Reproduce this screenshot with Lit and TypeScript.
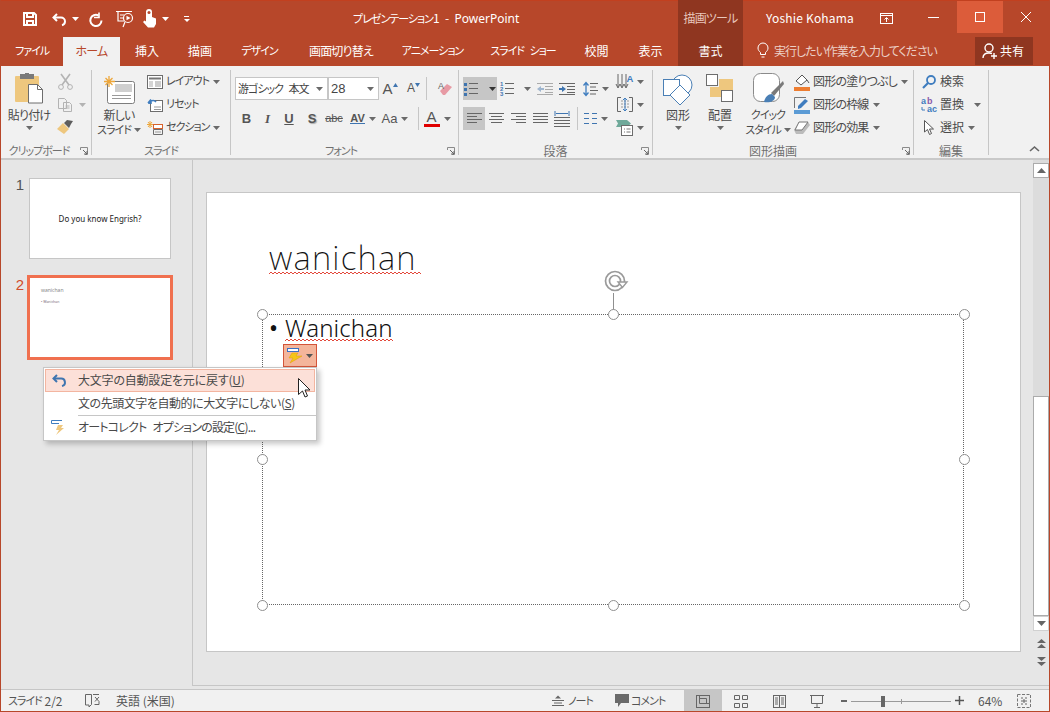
import { LitElement, html, css, svg } from "lit";
import { customElement } from "lit/decorators.js";

const ic = (w: number, h: number, body: unknown) =>
  html`<svg class="ic" width=${w} height=${h} viewBox="0 0 ${w} ${h}" fill="none">${body}</svg>`;
const caret = (c = "#6a6a6a") => ic(7, 4, svg`<path d="M0 0h7L3.5 4z" fill=${c}/>`);
const W = "#fff", G = "#6d6d6d", O = "#eec77e";

const I: Record<string, unknown> = {
  save: ic(16, 16, svg`<path d="M2 2h10l2 2v10H2z M5 2v4h6V2 M5 14v-4h6v4" stroke=${W} stroke-width="2"/>`),
  undo: ic(16, 14, svg`<path d="M5 2L1.5 5.5 5 9" stroke=${W} stroke-width="2"/><path d="M2 5.5h7a4 4 0 0 1 4 4 4 4 0 0 1-3 3.8" stroke=${W} stroke-width="2"/>`),
  redo: ic(15, 15, svg`<path d="M10.5 3.5a5.6 5.6 0 1 0 3 5" stroke=${W} stroke-width="2"/><path d="M10 0.5v5h-5" stroke=${W} stroke-width="1.6" transform="translate(1 0)"/>`),
  present: ic(18, 18, svg`<path d="M0 1.5h16M2 2v9h6M9 12l-2 5" stroke=${W} stroke-width="1.2"/><circle cx="12" cy="8" r="4.5" stroke=${W} stroke-width="1.2"/><path d="M10.5 5.8l4 2.2-4 2.2z" fill=${W}/><path d="M4 5h4M4 8h3" stroke=${W}/>`),
  touch: ic(14, 20, svg`<path d="M3 3a3 3 0 0 1 6 0v5l4 1.5V15l-2 3.5H5L0 13l1.5-1.5L3 12.500z" fill=${W}/><circle cx="6" cy="3.500" r="1.500" fill="#b7472a"/>`),
  ribbonDisp: ic(13, 11, svg`<rect x=".5" y=".5" width="12" height="10" stroke=${W}/><path d="M1 2.500h11" stroke=${W}/><path d="M6.500 9V5M4.500 6.500l2-2 2 2" stroke=${W}/>`),
  bulb: ic(12, 16, svg`<path d="M3.500 10.500C2 9 1 8 1 6a5 5 0 0 1 10 0c0 2-1 3-2.500 4.500v2h-5z M4.500 15h3" stroke=${W}/>`),
  person: ic(16, 16, svg`<circle cx="7" cy="5" r="4" stroke=${W} stroke-width="1.400"/><path d="M1 15c0-3 2-5 6-5 1 0 2 .2 3 .5" stroke=${W} stroke-width="1.400"/><path d="M12 10v6M9 13h6" stroke=${W} stroke-width="1.400"/>`),
  paste: ic(29, 31, svg`<rect x="0" y="3" width="24" height="26" rx="1" fill=${O}/><rect x="5" y="1" width="14" height="5" fill="#7a7a7a"/><rect x="10" y="0" width="4" height="3" fill="#7a7a7a"/><path d="M13.500 11.500h9l5 5v13.500h-14z" fill=${W} stroke=${G}/><path d="M22.500 11.500v5h5" stroke=${G}/>`),
  scissors: ic(15, 16, svg`<path d="M3 0l8 11M12 0L4 11" stroke="#b3b3b3" stroke-width="1.600"/><circle cx="3" cy="13" r="2.400" stroke="#b3b3b3"/><circle cx="12" cy="13" r="2.400" stroke="#b3b3b3"/>`),
  copy: ic(15, 14, svg`<path d="M.5.5h6l2 2v8h-8z M5.500 4.500h6l2 2v7h-8z" fill="#f1f1f1" stroke="#b3b3b3"/><path d="M7.500 8h4M7.500 10h4" stroke="#b3b3b3"/>`),
  brush: ic(17, 15, svg`<path d="M0 9l6-6 6 6-5 5z" fill=${O}/><path d="M7 3l3-3 6 1-2 3-2 4z" fill="#5d5d5d"/>`),
  newslide: ic(31, 28, svg`<rect x="3.500" y="5.500" width="27" height="22" rx="2" fill=${W} stroke="#7d7d7d"/><rect x="11" y="8" width="17" height="8" fill="#cfcfcf"/><path d="M8 19.500h19M8 22.500h19" stroke="#9a9a9a"/><path d="M5 0v11M0 5.500h11M1.500 2l7 7M8.500 2l-7 7" stroke="#eda73b" stroke-width="1.300"/>`),
  layout: ic(16, 14, svg`<rect x=".5" y=".5" width="15" height="13" fill=${W} stroke="#6d6d6d"/><path d="M2 3.500h12" stroke="#777" stroke-width="2"/><rect x="2" y="6" width="4" height="6" fill="#d4d4d4"/><path d="M8 7h6M8 9h6M8 11h6" stroke="#999"/>`),
  reset: ic(16, 14, svg`<rect x="3.500" y="2.500" width="12" height="11" fill=${W} stroke="#6d6d6d"/><path d="M7 9h7M7 11.500h7" stroke="#999"/><path d="M1 5l3-3.500M1 5h4 M2 6a4 4 0 0 1 7-2" stroke="#3f7dbf" stroke-width="1.600"/>`),
  section: ic(16, 14, svg`<path d="M3 0v7M0 3.500h7M1 1l4 5M5 1L1 6" stroke="#eda73b"/><rect x="6.500" y="3.500" width="9" height="4" fill=${W} stroke="#d9622b"/><path d="M6.500 8.500h9v5h-9z" stroke="#6d6d6d"/><path d="M8 11h6" stroke="#999"/>`),
  eraser: ic(15, 14, svg`<path d="M2 9l7-7 5 3-7 8H5z" fill="#e79aa4"/><text x="0" y="7" font-size="9" fill="#666" font-family="Liberation Sans">A</text>`),
  lspace: ic(15, 16, svg`<path d="M3 2v12M.5 4.500L3 1.500l2.500 3M.5 11.500l2.500 3 2.500-3" stroke="#3f7dbf" stroke-width="1.300"/><path d="M7 2.500h8M7 6h6M7 9.500h8M7 13h6" stroke="#666"/>`),
  textdir: ic(16, 16, svg`<path d="M1 0v13M5 0v13M9 0v13M-1 10l2 4 2-4M3 10l2 4 2-4M7 10l2 4 2-4" stroke="#666" stroke-width="1"/><text x="9.500" y="8" font-size="9.500" font-weight="700" fill="#3f7dbf" font-family="Liberation Sans">A</text>`),
  textalign: ic(16, 15, svg`<path d="M4 .5H.5v14H4M12 .5h3.500v14H12" stroke="#666"/><path d="M4 4h8M4 7h8M4 10h8" stroke="#999" stroke-dasharray="2 1"/><path d="M8 1v13M6 3l2-2 2 2M6 12l2 2 2-2" stroke="#3f7dbf"/>`),
  smart: ic(17, 17, svg`<path d="M0 1h11l4 3.500-4 3.500H0l2-3.500z" fill="#6fa99a"/><rect x="5.500" y="6.500" width="11" height="10" fill=${W} stroke="#6d6d6d"/><path d="M8 10h1M8 13h1M10.500 10h4M10.500 13h4" stroke="#777"/>`),
  shapes: ic(31, 31, svg`<circle cx="19" cy="11" r="10" fill=${W} stroke="#4a7fb5"/><rect x=".5" y="5.500" width="16" height="16" fill=${W} stroke="#4a7fb5"/><path d="M17 11l10 10-10 10L7 21z" fill=${W} stroke="#4a7fb5"/>`),
  arrange: ic(28, 29, svg`<rect x="13" y="5" width="14" height="12" fill=${O}/><rect x="4" y="13" width="14" height="10" fill=${O}/><rect x=".5" y=".5" width="11" height="11" fill=${W} stroke="#6d6d6d"/><rect x="15.500" y="16.500" width="11" height="11" fill=${W} stroke="#6d6d6d"/>`),
  quick: ic(31, 31, svg`<rect x=".5" y=".5" width="26" height="28" rx="7" fill=${W} stroke="#8a8a8a"/><path d="M30 8L18 20l3 3 10-12z" fill="#7a7a7a"/><path d="M11 29c1-5 4-8 8-8l3 3c0 4-5 6-11 5z" fill="#4a7fb5"/>`),
  fill: ic(16, 16, svg`<path d="M2 7l6-6 5 5-6 5z" fill=${W} stroke="#555"/><path d="M13 6l2 3" stroke="#555"/><rect x="0" y="13" width="16" height="4" fill="#ed7d31"/>`),
  stroke: ic(16, 16, svg`<path d="M.5 11V.5H12" stroke="#777"/><path d="M4 9l7-7 3 2-7 7-3 1z" fill="#3f7dbf"/><rect x="0" y="13" width="16" height="4" fill="#5b9bd5"/>`),
  effect: ic(16, 13, svg`<path d="M5 1h9l2 3-7 9H2L0 9z" fill="#bbb"/><path d="M5 1h9L8 9H1z" fill=${W} stroke="#777"/>`),
  search: ic(14, 14, svg`<circle cx="9" cy="5" r="4" stroke="#3f7dbf" stroke-width="1.800"/><path d="M6 8l-5 5" stroke="#3f7dbf" stroke-width="2.200"/>`),
  replace: ic(16, 15, svg`<text x="0" y="7" font-size="9" font-weight="700" fill="#3f7dbf" font-family="Liberation Sans">a</text><text x="6" y="7" font-size="9" font-weight="700" fill="#8a5aa8" font-family="Liberation Sans">b</text><text x="6" y="15" font-size="9" font-weight="700" fill="#3f7dbf" font-family="Liberation Sans">ac</text><path d="M1 10v3h3" stroke="#3f7dbf"/>`),
  select: ic(10, 15, svg`<path d="M.5.500v11.500l3-2.500 2 5 2-1-2-4.500h4z" fill=${W} stroke="#555"/>`),
  launcher: ic(8, 8, svg`<path d="M.5 3V.5H7.500V7.500H5" stroke="#8a8a8a"/><path d="M3 3l4 4M4 7h3V4" stroke="#666"/>`),
  up: ic(11, 6, svg`<path d="M1 5l4.500-4L10 5" stroke="#666" stroke-width="1.600"/>`),
  rotate: ic(24, 24, svg`<circle cx="11" cy="12" r="9.500" stroke="#9a9a9a" stroke-width="1.700"/><circle cx="11" cy="12" r="5.500" stroke="#9a9a9a" stroke-width="1.700"/><path d="M14 13h9l-4.500 5.500z" fill="#fff" stroke="#9a9a9a" stroke-width="1.400"/>`),
  bolt: ic(16, 15, svg`<rect x=".5" y=".5" width="11" height="3" fill=${W} stroke="#3a6fc4"/><path d="M11 5H5L2 10h4l-3 5 12-7H9z" fill="#f5c518" stroke="#e0a000" stroke-width=".5"/>`),
  boltG: ic(15, 15, svg`<path d="M.5 3.500V.5H11" stroke="#3f7dbf"/><path d="M.5 3.500H8" stroke="#3f7dbf"/><path d="M12 5H7L5 10h3l-3 5 8-7H10z" fill="#eec77e"/>`),
  menuUndo: ic(15, 13, svg`<path d="M5 1L1.500 4.500 5 8" stroke="#3f75b0" stroke-width="2"/><path d="M2 4.500h7a3.800 3.800 0 0 1 1 7.500" stroke="#3f75b0" stroke-width="2"/>`),
  cursor: ic(13, 21, svg`<path d="M.5.5v16l4-3.500 2.500 6 2.500-1-2.500-6h5z" fill=${W} stroke="#222"/>`),
  sNote: ic(12, 11, svg`<path d="M3 3.500l3-3 3 3z" fill="#666"/><path d="M0 5.500h12M2 8h8M0 10.500h12" stroke="#666"/>`),
  sComment: ic(14, 13, svg`<path d="M0 0h14v9H6l-3 4V9H0z" fill="#6a6a6a"/>`),
  sBook: ic(15, 13, svg`<path d="M.5.5H6.500v10L4 13v-2H.5zM8 .5h6" stroke="#666"/><path d="M9.500 10.500h4.500v-3M10 3l4 4.500M14 3l-4 4.500" stroke="#666"/>`),
  vNormal: ic(14, 13, svg`<rect x=".5" y=".5" width="13" height="12" stroke="#666"/><path d="M3.500 1v7.500h10M3.500 3.500h7v5" stroke="#666"/>`),
  vGrid: ic(14, 13, svg`<path d="M.5.5h5v4h-5zM8.500.5h5v4h-5zM.5 8.500h5v4h-5zM8.500 8.500h5v4h-5z" stroke="#666"/>`),
  vRead: ic(13, 13, svg`<rect x=".5" y=".5" width="12" height="12" stroke="#666"/><path d="M6.500 0v13M2 3h3M2 5h3M2 7h3M2 9h3M8 3h3M8 5h3M8 7h3M8 9h3" stroke="#666"/>`),
  vShow: ic(14, 13, svg`<path d="M0 .5h14M1.500 1v7.500h11V1M7 9v3M4 12.500h6" stroke="#666"/>`),
  vFit: ic(14, 14, svg`<rect x=".5" y=".5" width="13" height="13" stroke="#777" stroke-dasharray="3 1.500"/><path d="M4 4h2M8 4h2M4 10h2M8 10h2M4 7h6M7 5v4" stroke="#666"/>`),
};

const lines = (rows: number[][], c = "#666") =>
  rows.map(([x, y, w]) => svg`<path d="M${x} ${y + 0.5}h${w}" stroke=${c}/>`);
const dots = [3, 8, 13].map((y) => svg`<rect x="0" y=${y - 1} width="3" height="3" fill="#3f75b0"/>`);
const P: Record<string, unknown> = {
  bullets: ic(14, 15, svg`${dots}${lines([[5, 2, 9], [5, 7, 9], [5, 12, 9]])}`),
  numbers: ic(14, 15, svg`<text x="0" y="5" font-size="6" font-weight="700" fill="#3f75b0" font-family="Liberation Sans">1</text><text x="0" y="10" font-size="6" font-weight="700" fill="#3f75b0" font-family="Liberation Sans">2</text><text x="0" y="15" font-size="6" font-weight="700" fill="#3f75b0" font-family="Liberation Sans">3</text>${lines([[5, 2, 9], [5, 7, 9], [5, 12, 9]])}`),
  dec: ic(16, 12, svg`<path d="M0 6l4-3v2h3v2H4v2z" fill="#9fb6cf"/>${lines([[0, 0, 16], [8, 3, 8], [8, 6, 8], [8, 9, 8], [0, 11, 16]], "#aaa")}`),
  inc: ic(16, 12, svg`<path d="M7 6L3 3v2H0v2h3v2z" fill="#3f75b0"/>${lines([[0, 0, 16], [8, 3, 8], [8, 6, 8], [8, 9, 8], [0, 11, 16]])}`),
  left: ic(15, 12, svg`${lines([[0, 0, 15], [0, 3, 10], [0, 6, 15], [0, 9, 10]])}`),
  center: ic(15, 12, svg`${lines([[0, 0, 15], [2, 3, 11], [0, 6, 15], [2, 9, 11]])}`),
  right: ic(15, 12, svg`${lines([[0, 0, 15], [5, 3, 10], [0, 6, 15], [5, 9, 10]])}`),
  just: ic(15, 12, svg`${lines([[0, 0, 15], [0, 3, 15], [0, 6, 15], [0, 9, 15]])}`),
  dist: ic(16, 16, svg`<path d="M1 0v5M15 0v5M2 2.500h12" stroke="#3f75b0"/>${lines([[0, 6, 16], [0, 9, 16], [0, 12, 16], [0, 15, 16]])}`),
  cols: ic(13, 11, svg`${lines([[0, 0, 5], [0, 5, 5], [0, 10, 5], [8, 0, 5], [8, 5, 5], [8, 10, 5]], "#3f75b0")}`),
};

const tabs: [string, number, string][] = [["ファイル", 62, "k"], ["ホーム", 57, "m"], ["挿入", 54, ""], ["描画", 52, ""], ["デザイン", 67, "k"], ["画面切り替え", 96, "m"], ["アニメーション", 87, "k"], ["スライド ショー", 94, "k"], ["校閲", 53, ""], ["表示", 55, ""]];
const handles = [[263, 314], [613, 314], [964, 314], [263, 459], [964, 459], [263, 605], [613, 605], [964, 605]];
const zig = (n: number) => {
  let d = "M0 2";
  for (let i = 1; i <= n; i++) d += `l2 ${i % 2 ? -2 : 2}`;
  return d;
};

@customElement("app-root")
export class AppRoot extends LitElement {
  static styles = css`
    :host { display: flex; flex-direction: column; position: relative; width: 1050px; height: 712px; box-sizing: border-box; border: 1px solid #b7472a; border-top: 0; overflow: hidden; background: #e6e6e6; color: #4a4a4a;
      font: 12px/15px "Noto Sans CJK JP", "Noto Sans", sans-serif; font-feature-settings: "palt"; }
    * { box-sizing: border-box; }
    .k { font-size: 11px; letter-spacing: -1px; word-spacing: 4px; white-space: nowrap; }
    .m { letter-spacing: -.8px; white-space: nowrap; }
    .ic { display: block; flex: none; overflow: visible; }
    .title { height: 37px; flex: none; background: #b7472a; border-top: 1px solid #c2401f; display: flex; color: #fff; align-items: stretch; position: relative; }
    .qat { display: flex; align-items: center; padding-left: 21px; width: 352px; flex: none; }
    .qat > * { flex: none; }
    .q-save { margin-right: 14px; }
    .q-undo { margin-right: 4px; }
    .q-car1 { margin-right: 9px; }
    .q-redo { margin-right: 13px; }
    .q-pres { margin-right: 9px; }
    .q-touch { margin-right: 5px; }
    .q-car2 { margin-right: 15px; }
    .qmore { width: 5px; display: flex; flex-direction: column; gap: 2px; }
    .qmore i { display: block; height: 1px; background: #fff; }
    .qmore b { display: block; width: 0; height: 0; border: 3px solid transparent; border-top: 3px solid #fff; border-bottom: 0; margin-left: -.5px; }
    .doc { width: 325px; padding-top: 9px; flex: none; white-space: pre; }
    .doc b { font-weight: 400; font-family: "Noto Sans", sans-serif; font-size: 12px; }
    .ctx { width: 65px; flex: none; background: #8f3620; color: #e8c7bc; text-align: center; padding-top: 10px; margin-top: -1px; }
    .user { width: 136px; padding: 9px 0 0 23px; flex: none; letter-spacing: .2px; }
    .disp { width: 44px; flex: none; padding: 12px 0 0 1px; }
    .winb { width: 46px; flex: none; height: 32px; display: flex; align-items: center; justify-content: center; }
    .winb.min { width: 34px; padding-left: 5px; justify-content: flex-start; }
    .max { background: #dc5c3a; }
    .tabs { height: 29px; flex: none; background: #b7472a; display: flex; color: #fff; align-items: stretch; }
    .tab { display: flex; align-items: center; justify-content: center; white-space: nowrap; padding-bottom: 3px; }
    .tab.on { background: #f1f1f1; color: #b7472a; }
    .tab.fmt { width: 65px; background: #8f3620; }
    .tell { display: flex; align-items: center; gap: 5px; color: #ecd0c6; padding-left: 14px; width: 232px; flex: none; padding-bottom: 3px; white-space: nowrap; }
    .tell span { letter-spacing: -1px; }
    .share { width: 58px; margin-top: -1px; height: 29px; background: #8f3620; display: flex; align-items: center; gap: 2px; padding-left: 7px; color: #fff; }
    .ribbon { height: 94px; flex: none; background: #f1f1f1; border-bottom: 2px solid #c9c9c9; display: flex; padding-top: 4px; position: relative; }
    .g { height: 85px; border-right: 1px solid #c6c6c6; flex: none; display: flex; flex-direction: column; position: relative; }
    .gb { height: 69px; display: flex; flex: none; }
    .gl { flex: 1; text-align: center; color: #707070; padding-top: 4px; display: flex; justify-content: center; white-space: nowrap; }
    .lau { position: absolute; right: 3px; bottom: 0; }
    .big { display: flex; flex-direction: column; align-items: center; flex: none; white-space: nowrap; margin-top: -1px; }
    .bi { height: 38px; display: flex; align-items: flex-end; flex: none; padding-bottom: 3px; }
    .bc { height: 12px; display: flex; align-items: center; justify-content: center; gap: 3px; }
    .bc2 { height: 15px; }
    .col { display: flex; flex-direction: column; flex: none; }
    .row { height: 23px; display: flex; align-items: center; white-space: nowrap; flex: none; }
    .row .t { margin: -2px 4px 0 3px; }
    .cell { height: 23px; display: flex; align-items: center; justify-content: center; gap: 4px; flex: none; }
    .sel { background: #c6c6c6; }
    .stack { padding-top: 7px; gap: 7px; display: flex; flex-direction: column; }
    .hrow { display: flex; height: 23px; flex: none; }
    .select { height: 23px; background: #fff; border: 1px solid #c6c6c6; display: flex; align-items: center; justify-content: space-between; padding: 0 4px 0 2px; color: #444; flex: none; white-space: nowrap; }
    .gsep { width: 1px; height: 23px; background: #c6c6c6; flex: none; }
    .fa { font-family: "Liberation Sans", sans-serif; position: relative; color: #555; }
    .btn { font-family: "Liberation Sans", sans-serif; color: #555; font-size: 13px; }
    .bar { display: flex; flex-direction: column; align-items: center; gap: 1px; }
    .bar i { display: block; width: 16px; height: 3px; background: #e00000; }
    .bar span { font: 15px/12px "Liberation Sans", sans-serif; color: #555; }
    .collapse { position: absolute; right: 9px; bottom: 6px; }
    .main { height: 529px; flex: none; display: flex; }
    .panel { width: 192px; flex: none; border-right: 1px solid #c6c6c6; padding: 18px 0 0 0; height: 526px; display: flex; flex-direction: column; gap: 16px; }
    .th { display: flex; align-items: flex-start; height: 81px; }
    .th.two { height: 85px; }
    .num { width: 28px; font: 15px/14px "Liberation Sans", sans-serif; color: #555; text-align: right; padding: 0 5px 0 0; }
    .two .num { width: 26px; color: #d14c2a; padding-right: 3px; margin-top: 3px; }
    .thumb { width: 142px; height: 81px; background: #fff; border: 1px solid #c6c6c6; display: flex; align-items: center; justify-content: center; font: 400 8px "Noto Sans", sans-serif; color: #222; }
    .two .thumb { width: 146px; height: 85px; border: 3px solid #f0704f; position: relative; display: block; padding: 7px 0 0 11px; font-size: 5px; line-height: 11px; color: #888; }
    .thumb .sm { font-size: 3.500px; color: #7d7080; display: block; }
    .work { flex: 1; min-width: 0; display: flex; flex-direction: column; }
    .wt { height: 526px; display: flex; border-bottom: 1px solid #c6c6c6; flex: none; }
    .stage { width: 840px; padding: 32px 12px 0 13px; flex: none; }
    .slide { width: 815px; height: 460px; background: #fff; border: 1px solid #c6c6c6; position: relative; }
    .sb { width: 16px; flex: none; display: flex; flex-direction: column; align-items: stretch; }
    .sbup { height: 15px; background: #fff; border: 1px solid #ababab; display: flex; align-items: center; justify-content: center; flex: none; }
    .sbdn { height: 15px; background: #fff; display: flex; align-items: center; justify-content: center; border: 1px solid #d0d0d0; flex: none; }
    .thumbbar { height: 220px; background: #fff; border: 1px solid #ababab; flex: none; }
    .sbh { height: 3px; background: #dcdcdc; }
    .sbtrack { height: 218px; background: #dcdcdc; flex: none; }
    .dbl { display: flex; flex-direction: column; align-items: center; flex: none; padding-top: 8px; gap: 9px; }
    .status { height: 23px; flex: none; background: #f1f1f1; border-top: 1px solid #c6c6c6; display: flex; align-items: center; color: #555; position: relative; }
    .st { display: flex; align-items: center; flex: none; height: 100%; white-space: nowrap; padding-bottom: 1px; }
    .vb { width: 38px; height: 100%; display: flex; align-items: center; justify-content: center; flex: none; }
    .slider { width: 100px; height: 1px; background: #9a9a9a; position: relative; flex: none; margin: 0 4px; }
    .slider i { position: absolute; left: 30px; top: -5px; width: 4px; height: 11px; background: #666; }
    .slider b { position: absolute; left: 50px; top: -2px; width: 1px; height: 5px; background: #9a9a9a; }
    .ttl { position: absolute; left: 62px; top: 40px; font: 200 33px/50px "Noto Sans", sans-serif; color: #111; letter-spacing: 1.200px; white-space: nowrap; }
    .body { position: absolute; left: 62px; top: 119px; font: 300 24px/32px "Noto Sans", sans-serif; color: #111; letter-spacing: .1px; white-space: nowrap; }
    .body span { display: inline-block; width: 16px; font-weight: 400; }
    .squig { position: absolute; }
    .box { position: absolute; left: 55px; top: 121px; width: 702px; height: 291px; border: 1px dotted #666; }
    .handle { position: absolute; width: 11px; height: 11px; border-radius: 50%; background: #fff; border: 1.500px solid #8f8f8f; }
    .rotline { position: absolute; left: 406px; top: 100px; width: 1px; height: 21px; background: #8f8f8f; }
    .rot { position: absolute; left: 397px; top: 76px; }
    .ac { position: absolute; left: 76px; top: 151px; width: 34px; height: 23px; background: #f4b59b; border: 1px solid #d3553a; display: flex; align-items: center; gap: 3px; padding-left: 3px; }
    .menu { position: absolute; left: 42px; top: 367px; width: 274px; height: 74px; background: #fff; border: 1px solid #c6c6c6; box-shadow: 3px 3px 5px rgba(0,0,0,.22); padding: 1px; color: #4a4a4a; }
    .mi { height: 23px; display: flex; align-items: center; position: relative; white-space: nowrap; }
    .mi span { margin-top: -2px; }
    .mi.on { background: #fce0d8; border: 1px solid #f3b5a0; height: 23px; }
    .mic { width: 33px; display: flex; justify-content: center; flex: none; padding-right: 6px; }
    .on .mic { width: 32px; }
    .ms { height: 1px; background: #c6c6c6; margin: 0 -1px 0 33px; }
    .cur { position: absolute; left: 297px; top: 378px; }
  `;

  private cellRow(cells: [number, unknown, string?][]) {
    return html`<div class="hrow">${cells.map(([w, c, k]) => html`<div class="cell ${k || ""}" style="width:${w}px">${c}</div>`)}</div>`;
  }

  private ribbonBody() {
    const sr = (icon: unknown, t: string, cls = "k", car = true) => html`<div class="row"><div class="cell" style="width:16px">${icon}</div><span class="t ${cls}">${t}</span>${car ? caret() : ""}</div>`;
    return html`
      <div class="g" style="width:91px">
        <div class="gb">
          <div class="big" style="width:56px"><div class="bi">${I.paste}</div><div class="m">貼り付け</div><div class="bc">${caret()}</div></div>
          <div class="col">
            <div class="row"><div class="cell" style="width:16px">${I.scissors}</div></div>
            <div class="row"><div class="cell" style="width:16px">${I.copy}</div><div class="cell" style="width:18px">${caret("#b3b3b3")}</div></div>
            <div class="row"><div class="cell" style="width:16px">${I.brush}</div></div>
          </div>
        </div>
        <div class="gl" style="padding-right:14px"><span class="k">クリップボード</span></div><div class="lau">${I.launcher}</div>
      </div>
      <div class="g" style="width:139px">
        <div class="gb" style="padding-left:1px">
          <div class="big" style="width:52px"><div class="bi">${I.newslide}</div><div class="m">新しい</div><div class="bc bc2"><span class="k">スライド</span> ${caret()}</div></div>
          <div class="col" style="margin-left:2px">
            ${sr(I.layout, "レイアウト")}${sr(I.reset, "リセット", "k", false)}${sr(I.section, "セクション")}
          </div>
        </div>
        <div class="gl"><span class="k">スライド</span></div>
      </div>
      <div class="g" style="width:228px">
        <div class="gb stack" style="padding-left:4px">
          <div class="hrow">
            <div class="select" style="width:93px"><span class="k">游ゴシック 本文</span>${caret()}</div>
            <div class="select" style="width:51px;font-family:'Liberation Sans'"><span style="font-size:13px">28</span>${caret()}</div>
            <div class="cell" style="width:22px"><span class="fa" style="font-size:15px">A</span><svg width="5" height="4" style="margin:-8px 0 0 -4px"><path d="M0 4l2.500-4L5 4z" fill="#3f75b0"/></svg></div>
            <div class="cell" style="width:25px"><span class="fa" style="font-size:12px">A</span><svg width="5" height="4" style="margin:-8px 0 0 -4px"><path d="M0 0l2.500 4L5 0z" fill="#3f75b0"/></svg></div>
            <div class="gsep"></div>
            <div class="cell" style="width:36px">${I.eraser}</div>
          </div>
          ${this.cellRow([
            [23, html`<b class="btn">B</b>`],
            [19, html`<i class="btn" style="font-family:'Liberation Serif';font-weight:700">I</i>`],
            [24, html`<u class="btn" style="font-weight:700">U</u>`],
            [22, html`<b class="btn" style="text-shadow:1px 1px 1px #aaa">S</b>`],
            [22, html`<s class="btn" style="font-size:11px">abc</s>`],
            [36, html`<span class="btn" style="font-size:11px;font-weight:700;border-bottom:1px solid #3f75b0;line-height:10px">AV</span>${caret()}`],
            [28, html`<span class="btn">Aa</span>${caret()}`],
            [9, ""],
            [1, html`<div class="gsep"></div>`],
            [36, html`<div class="bar"><span>A</span><i></i></div>${caret()}`],
          ])}
        </div>
        <div class="gl" style="padding-right:7px"><span class="k">フォント</span></div><div class="lau">${I.launcher}</div>
      </div>
      <div class="g" style="width:194px">
        <div class="gb" style="padding-left:4px">
          <div class="col stack" style="width:151px">
            ${this.cellRow([
              [34, html`${P.bullets}<span style="width:3px"></span>${caret("#333")}`, "sel"],
              [36, html`${P.numbers}<span style="width:2px"></span>${caret()}`],
              [23, P.dec], [22, P.inc],
              [36, html`${I.lspace}${caret()}`],
            ])}
            ${this.cellRow([
              [22, P.left, "sel"], [22, P.center], [22, P.right], [22, P.just], [22, P.dist],
              [4, ""], [1, html`<div class="gsep"></div>`], [36, html`${P.cols}${caret()}`],
            ])}
          </div>
          <div class="col">
            <div class="row"><div class="cell" style="width:32px">${I.textdir}${caret()}</div></div>
            <div class="row"><div class="cell" style="width:32px">${I.textalign}${caret()}</div></div>
            <div class="row"><div class="cell" style="width:32px">${I.smart}${caret()}</div></div>
          </div>
        </div>
        <div class="gl">段落</div><div class="lau">${I.launcher}</div>
      </div>
      <div class="g" style="width:261px">
        <div class="gb" style="padding-left:6px">
          <div class="big" style="width:38px"><div class="bi" style="padding-bottom:2px">${I.shapes}</div><div>図形</div><div class="bc">${caret()}</div></div>
          <div class="big" style="width:42px;margin-left:2px"><div class="bi" style="padding-bottom:4px">${I.arrange}</div><div>配置</div><div class="bc">${caret()}</div></div>
          <div class="big" style="width:52px;margin-left:1px"><div class="bi" style="padding-bottom:3px">${I.quick}</div><div class="k">クイック</div><div class="bc bc2"><span class="k">スタイル</span> ${caret()}</div></div>
          <div class="col">
            ${sr(I.fill, "図形の塗りつぶし", "m")}${sr(I.stroke, "図形の枠線", "m")}${sr(I.effect, "図形の効果", "m")}
          </div>
        </div>
        <div class="gl" style="padding-right:20px">図形描画</div><div class="lau">${I.launcher}</div>
      </div>
      <div class="g" style="width:75px">
        <div class="gb" style="padding-left:7px">
          <div class="col">
            ${sr(I.search, "検索", "", false)}
            <div class="row"><div class="cell" style="width:16px">${I.replace}</div><span class="t" style="margin-right:10px">置換</span>${caret()}</div>
            ${sr(I.select, "選択", "")}
          </div>
        </div>
        <div class="gl">編集</div>
      </div>
      <div class="collapse">${I.up}</div>`;
  }

  render() {
    return html`
      <div class="title">
        <div class="qat">
          <span class="q-save">${I.save}</span><span class="q-undo">${I.undo}</span>
          <span class="q-car1">${caret(W)}</span><span class="q-redo">${I.redo}</span>
          <span class="q-pres">${I.present}</span><span class="q-touch">${I.touch}</span>
          <span class="q-car2">${caret(W)}</span>
          <span class="qmore"><i></i><b></b></span>
        </div>
        <div class="doc"><span class="k">プレゼンテーション</span>1  -  <b>PowerPoint</b></div>
        <div class="ctx"><span class="m">描画ツール</span></div>
        <div class="user">Yoshie Kohama</div>
        <div class="disp">${I.ribbonDisp}</div>
        <div class="winb min"><svg width="11" height="1"><path d="M0 .5h11" stroke="#fff"/></svg></div>
        <div class="winb max">${ic(10, 10, svg`<rect x=".5" y=".5" width="9" height="9" stroke="#fff"/>`)}</div>
        <div class="winb">${ic(10, 10, svg`<path d="M0 0l10 10M10 0L0 10" stroke="#fff"/>`)}</div>
      </div>
      <div class="tabs">
        ${tabs.map(([t, w, c], i) => html`<div class="tab ${i === 1 ? "on" : ""}" style="width:${w}px"><span class=${c}>${t}</span></div>`)}
        <div class="tab fmt">書式</div>
        <div class="tell">${I.bulb}<span>実行したい作業を入力してください</span></div>
        <div class="share">${I.person}<span>共有</span></div>
      </div>
      <div class="ribbon">${this.ribbonBody()}</div>
      <div class="main">
        <div class="panel">
          <div class="th"><div class="num">1</div><div class="thumb">Do you know Engrish?</div></div>
          <div class="th two"><div class="num">2</div><div class="thumb">wanichan<span class="sm">• Wanichan</span></div></div>
        </div>
        <div class="work">
          <div class="wt">
            <div class="stage">
              <div class="slide">
                <div class="ttl">wanichan</div>
                <svg class="squig" style="left:62px;top:79px" width="152" height="3"><path d=${zig(76)} stroke="#e2473a" fill="none"/></svg>
                <div class="box"></div>
                <div class="rotline"></div>
                <div class="rot">${I.rotate}</div>
                ${handles.map(([x, y]) => html`<div class="handle" style="left:${x - 207 - 5 - (x === 263 ? 1 : 0)}px;top:${y - 193 - 5}px"></div>`)}
                <div class="body"><span>•</span>Wanichan</div>
                <svg class="squig" style="left:78px;top:146px" width="108" height="3"><path d=${zig(54)} stroke="#e2473a" fill="none"/></svg>
                <div class="ac">${I.bolt}${caret("#555")}</div>
              </div>
            </div>
            <div class="sb">
              <div class="sbh"></div>
              <div class="sbup">${ic(9, 5, svg`<path d="M0 5l4.500-5L9 5z" fill="#666"/>`)}</div>
              <div class="sbtrack"></div>
              <div class="thumbbar"></div>
              <div class="sbdn">${ic(9, 5, svg`<path d="M0 0l4.500 5L9 0z" fill="#666"/>`)}</div>
              <div class="dbl">
                ${ic(9, 9, svg`<path d="M0 4l4.500-4L9 4zM0 9l4.500-4L9 9z" fill="#666"/>`)}
                ${ic(9, 9, svg`<path d="M0 0l4.500 4L9 0zM0 5l4.500 4L9 5z" fill="#666"/>`)}
              </div>
            </div>
          </div>
        </div>
      </div>
      <div class="status">
        <div class="st" style="padding-left:7px;width:84px"><span class="k">スライド</span>&nbsp;2/2</div>
        <div class="st" style="width:31px">${I.sBook}</div>
        <div class="st" style="width:436px">英語 (米国)</div>
        <div class="st" style="width:63px;gap:4px">${I.sNote}<span class="k">ノート</span></div>
        <div class="st" style="width:69px;gap:2px">${I.sComment}<span class="k">コメント</span></div>
        <div class="vb sel">${I.vNormal}</div>
        <div class="vb">${I.vGrid}</div>
        <div class="vb">${I.vRead}</div>
        <div class="vb">${I.vShow}</div>
        <div class="st" style="width:11px;padding-left:5px"><svg width="6" height="2"><rect width="6" height="2" fill="#666"/></svg></div>
        <div class="slider"><i></i><b></b></div>
        <div class="st"><svg width="9" height="9"><path d="M4.500 0v9M0 4.500h9" stroke="#555" stroke-width="1.500"/></svg></div>
        <div class="st" style="width:67px;padding-left:14px;justify-content:space-between">64%${I.vFit}</div>
      </div>
      <div class="menu">
        <div class="mi on"><div class="mic">${I.menuUndo}</div><span style="letter-spacing:-.2px">大文字の自動設定を元に戻す(<u>U</u>)</span></div>
        <div class="mi"><div class="mic"></div><span style="letter-spacing:-.45px">文の先頭文字を自動的に大文字にしない(<u>S</u>)</span></div>
        <div class="ms"></div>
        <div class="mi"><div class="mic">${I.boltG}</div><span class="m" style="word-spacing:4px">オートコレクト オプションの設定(<u>C</u>)...</span></div>
      </div>
      <div class="cur">${I.cursor}</div>
    `;
  }
}
